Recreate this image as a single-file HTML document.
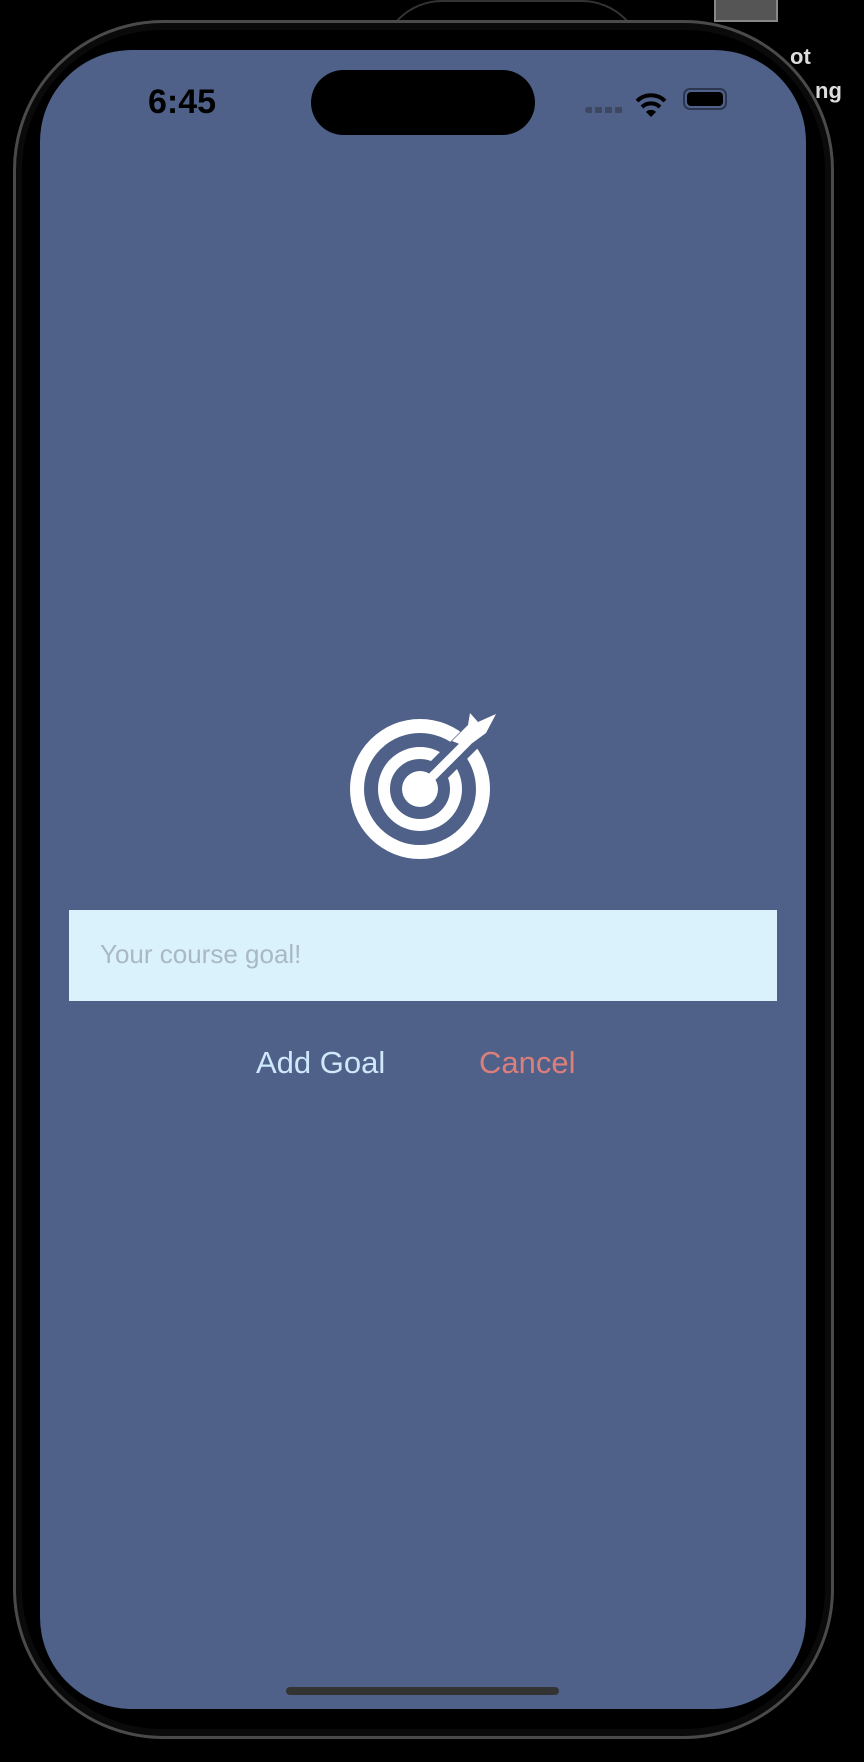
<!DOCTYPE html>
<html><head><meta charset="utf-8"><style>
html,body{margin:0;padding:0}
body{width:864px;height:1762px;background:#000;position:relative;overflow:hidden;font-family:"Liberation Sans",sans-serif}
.bgglow{position:absolute;left:380px;top:0;width:260px;height:60px;border-radius:130px 130px 0 0;border:2px solid #333;border-bottom:none;}
.frame{position:absolute;left:13px;top:20px;width:821px;height:1719px;border-radius:150px;background:#0a0a0a;border:3px solid #4a4a4a;box-sizing:border-box}
.frame2{position:absolute;left:22px;top:30px;width:803px;height:1699px;border-radius:140px;background:#000}
.screen{position:absolute;left:40px;top:50px;width:766px;height:1659px;border-radius:92px;background:#4f6189;overflow:hidden}
.island{position:absolute;left:271px;top:20px;width:224px;height:65px;border-radius:33px;background:#000}
.time{position:absolute;left:108px;top:33px;font-size:34px;font-weight:bold;color:#000}
.input{position:absolute;left:29px;top:860px;width:708px;height:91px;background:#d9f2fc}
.ph{position:absolute;left:31px;top:29px;font-size:26px;color:#a9b8c4}
.btn{position:absolute;top:995px;font-size:31px}
.home{position:absolute;left:246px;top:1637px;width:273px;height:8px;border-radius:4px;background:#333}
</style></head><body>
<div class="bgglow"></div>
<div style="position:absolute;left:714px;top:0;width:60px;height:20px;border:2px solid #888;border-top:none;background:#555"></div>
<div style="position:absolute;left:790px;top:44px;color:#ddd;font-weight:bold;font-size:22px">ot</div>
<div style="position:absolute;left:815px;top:78px;color:#ddd;font-weight:bold;font-size:22px">ng</div>
<div class="frame"></div>
<div class="frame2"></div>
<div class="screen">
  <div class="island"></div>
  <div class="time">6:45</div>
  <div style="position:absolute;left:545px;top:57px;width:40px;height:6px;background:repeating-linear-gradient(90deg,#3d4860 0 7px,transparent 7px 10px);border-radius:3px"></div>
  <svg style="position:absolute;left:594px;top:40px" width="34" height="30" viewBox="0 0 34 30">
    <path d="M3 11 A20 20 0 0 1 31 11" stroke="#000" stroke-width="4" fill="none"/>
    <path d="M8 17 A13 13 0 0 1 26 17" stroke="#000" stroke-width="4" fill="none"/>
    <path d="M12 22 L17 27 L22 22 A7 7 0 0 0 12 22Z" fill="#000"/>
  </svg>
  <div style="position:absolute;left:643px;top:38px;width:44px;height:22px;border:2px solid #2c3650;border-radius:7px;box-sizing:border-box"></div>
  <div style="position:absolute;left:647px;top:42px;width:36px;height:14px;background:#000;border-radius:4px"></div>
  <svg style="position:absolute;left:300px;top:639px" width="170" height="170" viewBox="0 0 170 170">
    <circle cx="80" cy="100" r="63" stroke="#fff" stroke-width="14" fill="none"/>
    <circle cx="80" cy="100" r="36" stroke="#fff" stroke-width="12" fill="none"/>
    <line x1="80" y1="100" x2="150" y2="30" stroke="#4f6189" stroke-width="24"/>
    <circle cx="80" cy="100" r="18" fill="#fff"/>
    <line x1="80" y1="100" x2="128" y2="52" stroke="#fff" stroke-width="9"/>
    <path d="M112 52 L128 36 L130 24 L138 33 L156 25 L146 44 L127 58 Z" fill="#fff"/>
  </svg>
  <div class="input"><div class="ph">Your course goal!</div></div>
  <div class="btn" style="left:216px;color:#cde9fb">Add Goal</div>
  <div class="btn" style="left:439px;color:#dc7f7b">Cancel</div>
  <div class="home"></div>
</div>
</body></html>
